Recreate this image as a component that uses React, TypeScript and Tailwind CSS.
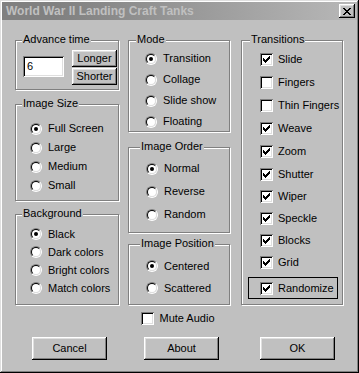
import React from 'react';

const raised =
  'bg-[#c0c0c0] shadow-[inset_-1px_-1px_0_#000,inset_1px_1px_0_#fff,inset_-2px_-2px_0_#808080,inset_2px_2px_0_#dfdfdf]';
const sunken =
  'bg-white shadow-[inset_1px_1px_0_#808080,inset_-1px_-1px_0_#fff,inset_2px_2px_0_#000,inset_-2px_-2px_0_#dfdfdf]';

const pixels = (rows: string[]) =>
  rows
    .flatMap((row, y) => row.split('').map((c, x) => (c === 'X' ? `M${x} ${y}h1v1h-1z` : '')))
    .join('');

const CHECK = pixels(['......X', '.....XX', 'X...XXX', 'XX.XXX.', 'XXXXX..', '.XXX...', '..X....']);
const CLOSE = pixels(['XX....XX', '.XX..XX.', '..XXXX..', '...XX...', '..XXXX..', '.XX..XX.', 'XX....XX']);

const Radio = ({ checked }: { checked?: boolean }) => (
  <span className="w-3 h-3 shrink-0 rounded-full border border-t-[#808080] border-l-[#808080] border-r-white border-b-white">
    <span className="w-full h-full flex items-center justify-center rounded-full border border-t-black border-l-black border-r-[#dfdfdf] border-b-[#dfdfdf] bg-white">
      {checked && <span className="w-1 h-1 rounded-full bg-black" />}
    </span>
  </span>
);

const Check = ({ checked }: { checked?: boolean }) => (
  <span className={`w-[13px] h-[13px] shrink-0 flex items-center justify-center ${sunken}`}>
    {checked && (
      <svg width="7" height="7" viewBox="0 0 7 7" shapeRendering="crispEdges">
        <path d={CHECK} fill="#000" />
      </svg>
    )}
  </span>
);

interface GroupProps {
  label: string;
  labelClass: string;
  className: string;
  children: React.ReactNode;
}

const Group: React.FC<GroupProps> = ({ label, labelClass, className, children }) => (
  <div className={`relative border border-[#808080] shadow-[inset_1px_1px_0_#fff,1px_1px_0_#fff] ${className}`}>
    <span className={`absolute top-[-8px] bg-[#c0c0c0] px-[1px] leading-[13px] ${labelClass}`}>{label}</span>
    {children}
  </div>
);

const RadioList = ({ items, selected, rowClass }: { items: string[]; selected: number; rowClass: string }) => (
  <>
    {items.map((item, i) => (
      <div key={item} className={`flex items-center ${rowClass}`}>
        <Radio checked={i === selected} />
        <span className="ml-[6px] leading-[13px]">{item}</span>
      </div>
    ))}
  </>
);

const transitions: [string, boolean][] = [
  ['Slide', true],
  ['Fingers', false],
  ['Thin Fingers', false],
  ['Weave', true],
  ['Zoom', true],
  ['Shutter', true],
  ['Wiper', true],
  ['Speckle', true],
  ['Blocks', true],
  ['Grid', true],
];

const Button = ({ children, className }: { children: React.ReactNode; className: string }) => (
  <button className={`flex items-center justify-center leading-[13px] ${raised} ${className}`}>{children}</button>
);

export default function App() {
  return (
    <div className="w-[359px] h-[373px] bg-[#c0c0c0] p-[2px] flex flex-col text-[11px] text-black font-['Liberation_Sans',Arial,sans-serif] shadow-[inset_-1px_-1px_0_#000,inset_1px_1px_0_#dfdfdf,inset_-2px_-2px_0_#808080,inset_2px_2px_0_#fff]">
      {/* title bar */}
      <div className="h-[18px] flex items-center bg-linear-to-r from-[#808080] from-15% to-[#b8b8b8]">
        <span className="pl-[4px] font-bold text-[12px] text-[#c0c0c0] leading-[14px]">World War II Landing Craft Tanks</span>
        <span className={`ml-auto mr-[2px] w-4 h-[14px] flex items-center justify-center ${raised}`}>
          <svg width="8" height="7" viewBox="0 0 8 7" shapeRendering="crispEdges">
            <path d={CLOSE} fill="#000" />
          </svg>
        </span>
      </div>

      {/* groups */}
      <div className="flex mt-[20px] pl-[13px]">
        <div className="flex flex-col w-[104px]">
          <Group label="Advance time" labelClass="left-[6px]" className="h-[50px] flex pl-[7px] pt-[9px] gap-[8px]">
            <div className={`w-[41px] h-[21px] mt-[6px] pl-[4px] flex items-center ${sunken}`}>6</div>
            <div className="flex flex-col gap-[1px]">
              <Button className="w-[45px] h-[17px]">Longer</Button>
              <Button className="w-[45px] h-[17px]">Shorter</Button>
            </div>
          </Group>
          <Group label="Image Size" labelClass="left-[6px]" className="mt-[14px] h-[97px] pl-[14px] pt-[14px]">
            <RadioList items={['Full Screen', 'Large', 'Medium', 'Small']} selected={0} rowClass="h-[19px]" />
          </Group>
          <Group label="Background" labelClass="left-[6px]" className="mt-[13px] h-[91px] pl-[14px] pt-[10px]">
            <RadioList items={['Black', 'Dark colors', 'Bright colors', 'Match colors']} selected={0} rowClass="h-[18px]" />
          </Group>
        </div>

        <div className="flex flex-col w-[102px] ml-[9px]">
          <Group label="Mode" labelClass="left-[7px]" className="h-[92px] pl-[16px] pt-[7px]">
            <RadioList items={['Transition', 'Collage', 'Slide show', 'Floating']} selected={0} rowClass="h-[21px]" />
          </Group>
          <Group label="Image Order" labelClass="left-[11px]" className="mt-[15px] h-[86px] pl-[17px] pt-[9px]">
            <RadioList items={['Normal', 'Reverse', 'Random']} selected={0} rowClass="h-[23px]" />
          </Group>
          <Group label="Image Position" labelClass="left-[11px]" className="mt-[11px] h-[61px] pl-[17px] pt-[10px]">
            <RadioList items={['Centered', 'Scattered']} selected={0} rowClass="h-[22px]" />
          </Group>
        </div>

        <Group label="Transitions" labelClass="left-[8px]" className="ml-[11px] w-[102px] h-[265px] pt-[7px]">
          {transitions.map(([name, on], i) => (
            <div key={name} className={`flex items-center pl-[18px] ${i < 5 ? 'h-[23px]' : 'h-[22px]'}`}>
              <Check checked={on} />
              <span className="ml-[5px] leading-[13px]">{name}</span>
            </div>
          ))}
          <div className="mt-[4px] ml-[6px] w-[90px] h-[22px] border border-black flex items-center pl-[11px]">
            <Check checked />
            <span className="ml-[5px] leading-[13px]">Randomize</span>
          </div>
        </Group>
      </div>

      {/* mute */}
      <div className="flex justify-center items-center mt-[7px] h-[13px] pr-[3px]">
        <Check />
        <span className="ml-[5px] leading-[13px]">Mute Audio</span>
      </div>

      {/* buttons */}
      <div className="flex mt-[12px] pl-[30px]">
        <Button className="w-[75px] h-[23px]">Cancel</Button>
        <Button className="w-[75px] h-[23px] ml-[37px]">About</Button>
        <Button className="w-[75px] h-[23px] ml-[41px]">OK</Button>
      </div>
    </div>
  );
}
